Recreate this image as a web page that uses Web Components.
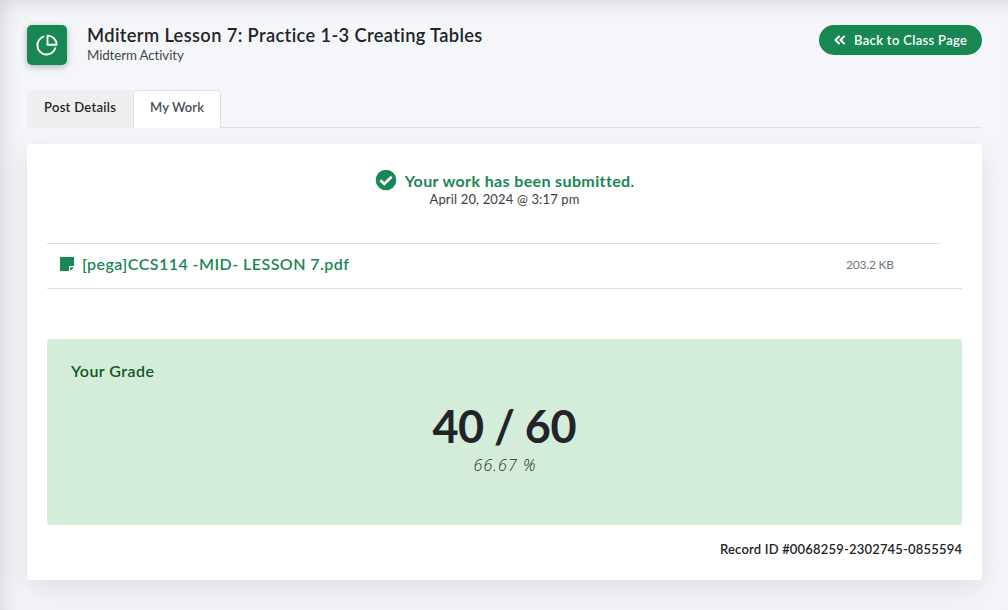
<!DOCTYPE html>
<html lang="en"><head><meta charset="utf-8"><title>My Work</title>
<style>
html,body{margin:0;height:100%}
body{font-family:Lato,"Open Sans",sans-serif;color:#212529;background:#f5f6fa;overflow:hidden}
</style></head><body>
<work-page></work-page>
<script>
const define=(name,html,after)=>customElements.define(name,class extends HTMLElement{
  constructor(){super();this.attachShadow({mode:'open'}).innerHTML=html;}
  connectedCallback(){if(after)after(this);}
});

/* Text line tracked to a given width: <text-line w="100">text</text-line> */
define('text-line','<style>:host{display:block;white-space:pre;width:max-content}span{display:inline-block}</style><span><slot></slot></span>',el=>{
  const s=el.shadowRoot.querySelector('span'),w=+el.getAttribute('w');
  const fit=()=>{
    s.style.letterSpacing='normal';s.style.marginRight='0';
    const n=el.textContent.length,ls=(w-s.getBoundingClientRect().width)/(n-1);
    s.style.letterSpacing=ls+'px';s.style.marginRight=-ls+'px';
  };
  requestAnimationFrame(fit);
});

define('page-header',`<style>
:host{display:flex;height:65px;align-items:flex-start}
.icon{width:40px;height:40px;border-radius:5px;background:#198754;box-shadow:0 2px 7px rgba(0,0,0,.28);display:grid;place-items:center}
.txt{margin:-1px 0 0 20px;flex:1}
.t{font-size:18.3px;font-weight:600;line-height:22px;color:#212529}
.s{font-size:13.3px;line-height:19px;color:#444650}
.btn{box-sizing:border-box;width:163px;height:30px;border-radius:15px;background:#198754;color:#fff;display:flex;align-items:center;padding-left:15px;font-size:13px;font-weight:600;line-height:30px}
.btn svg{margin-right:8px}
</style>
<div class="icon"><svg width="22" height="22" viewBox="0 0 22 22" fill="none" stroke="#fff" stroke-width="1.9"><path d="M8.2 2.4A9.2 9.2 0 1 0 19.5 13.6"/><path d="M11.5 1.6V10.7H20.6A9.1 9.1 0 0 0 11.5 1.6Z" stroke-linejoin="round"/></svg></div>
<div class="txt"><text-line class="t" w="396">Mditerm Lesson 7: Practice 1-3 Creating Tables</text-line><text-line class="s" w="97">Midterm Activity</text-line></div>
<div class="btn"><svg width="12" height="10" viewBox="0 0 12 10" fill="none" stroke="#fff" stroke-width="2" stroke-linecap="round" stroke-linejoin="round"><path d="M5 1.5 1.5 5 5 8.5M10 1.5 6.5 5 10 8.5"/></svg><text-line w="113">Back to Class Page</text-line></div>`);

define('tab-bar',`<style>
:host{display:flex;height:37px;border-bottom:1px solid #dee2e6;font-size:13px;font-weight:600;line-height:35px}
.a{box-sizing:border-box;width:106px;height:38px;padding-left:17px;background:#efefef;border-radius:4px 0 0 0;color:#212529}
.b{box-sizing:border-box;width:88px;height:38px;padding-left:16px;background:#fff;border:1px solid #dee2e6;border-bottom:0;border-radius:4px 4px 0 0;line-height:33px;color:#495057}
</style><div class="a"><text-line w="72">Post Details</text-line></div><div class="b"><text-line w="54">My Work</text-line></div>`);

define('submit-status',`<style>
:host{display:flex;flex-direction:column;align-items:center}
.r{display:flex;align-items:flex-start;color:#198754;font-size:16px;font-weight:700;line-height:22px}
svg{margin:-1px 8px 0 0}
.d{font-size:13px;line-height:16px;margin-top:-1px;color:#3b3e44}
</style><div class="r"><svg width="22" height="22" viewBox="0 0 22 22"><circle cx="11" cy="11" r="10.3" fill="#198754"/><path d="M5.4 11.2 9.3 14.9 16.6 7.7" fill="none" stroke="#fff" stroke-width="2.8"/></svg><text-line w="229">Your work has been submitted.</text-line></div><text-line class="d" w="150">April 20, 2024 @ 3:17 pm</text-line>`);

define('file-row',`<style>
:host{display:block;height:45px;border-bottom:1px solid #dee0e2}
.top{height:1px;width:892px;background:#dee0e2}
.r{display:flex;align-items:center;height:42px;padding:0 68px 0 13px;color:#198754;font-size:16px;font-weight:600}
svg{margin-right:8px;margin-top:-2px}
.f{margin-top:-3px}
.k{margin:-2px 0 0 auto;font-size:12px;font-weight:400;color:#6c757d}
</style><div class="top"></div><div class="r"><svg width="14" height="14" viewBox="0 0 14 14" fill="#198754"><path d="M0 0H14V9H9V14H0Z"/><path d="M10.2 10.2H14L10.2 14Z"/></svg><text-line class="f" w="267">[pega]CCS114 -MID- LESSON 7.pdf</text-line><text-line class="k" w="48">203.2 KB</text-line></div>`);

define('grade-panel',`<style>
:host{display:flex;flex-direction:column;box-sizing:border-box;height:186px;background:#d4edda;border-radius:4px;padding:21px 24px;align-items:center}
.g{align-self:flex-start;font-size:16px;font-weight:600;line-height:22px;color:#155724}
.n{font-size:45px;font-weight:700;line-height:54px;margin-top:17px;color:#212529}
.p{font-family:"Open Sans",sans-serif;font-size:16px;font-style:italic;font-weight:300;line-height:20px;margin-top:2px}
</style><text-line class="g" w="83">Your Grade</text-line><text-line class="n" w="144">40 / 60</text-line><text-line class="p" w="62">66.67 %</text-line>`);

define('work-card',`<style>
:host{display:block;box-sizing:border-box;height:436px;margin-top:16px;padding:26px 20px 0;background:#fff;border-radius:4px;box-shadow:0 10px 30px rgba(40,42,50,.11)}
submit-status{height:73px}
grade-panel{margin-top:50px}
.id{margin:14px 0 0 auto;font-size:13px;font-weight:600;line-height:20px}
</style><submit-status></submit-status><file-row></file-row><grade-panel></grade-panel><text-line class="id" w="242">Record ID #0068259-2302745-0855594</text-line>`);

define('work-page',`<style>
:host{display:block;box-sizing:border-box;height:610px;padding:25px 26px 0 27px;background:#f5f6fa;box-shadow:inset 9px 8px 22px -8px rgba(40,42,50,.18)}
</style><page-header></page-header><tab-bar></tab-bar><work-card></work-card>`);
</script></body></html>
